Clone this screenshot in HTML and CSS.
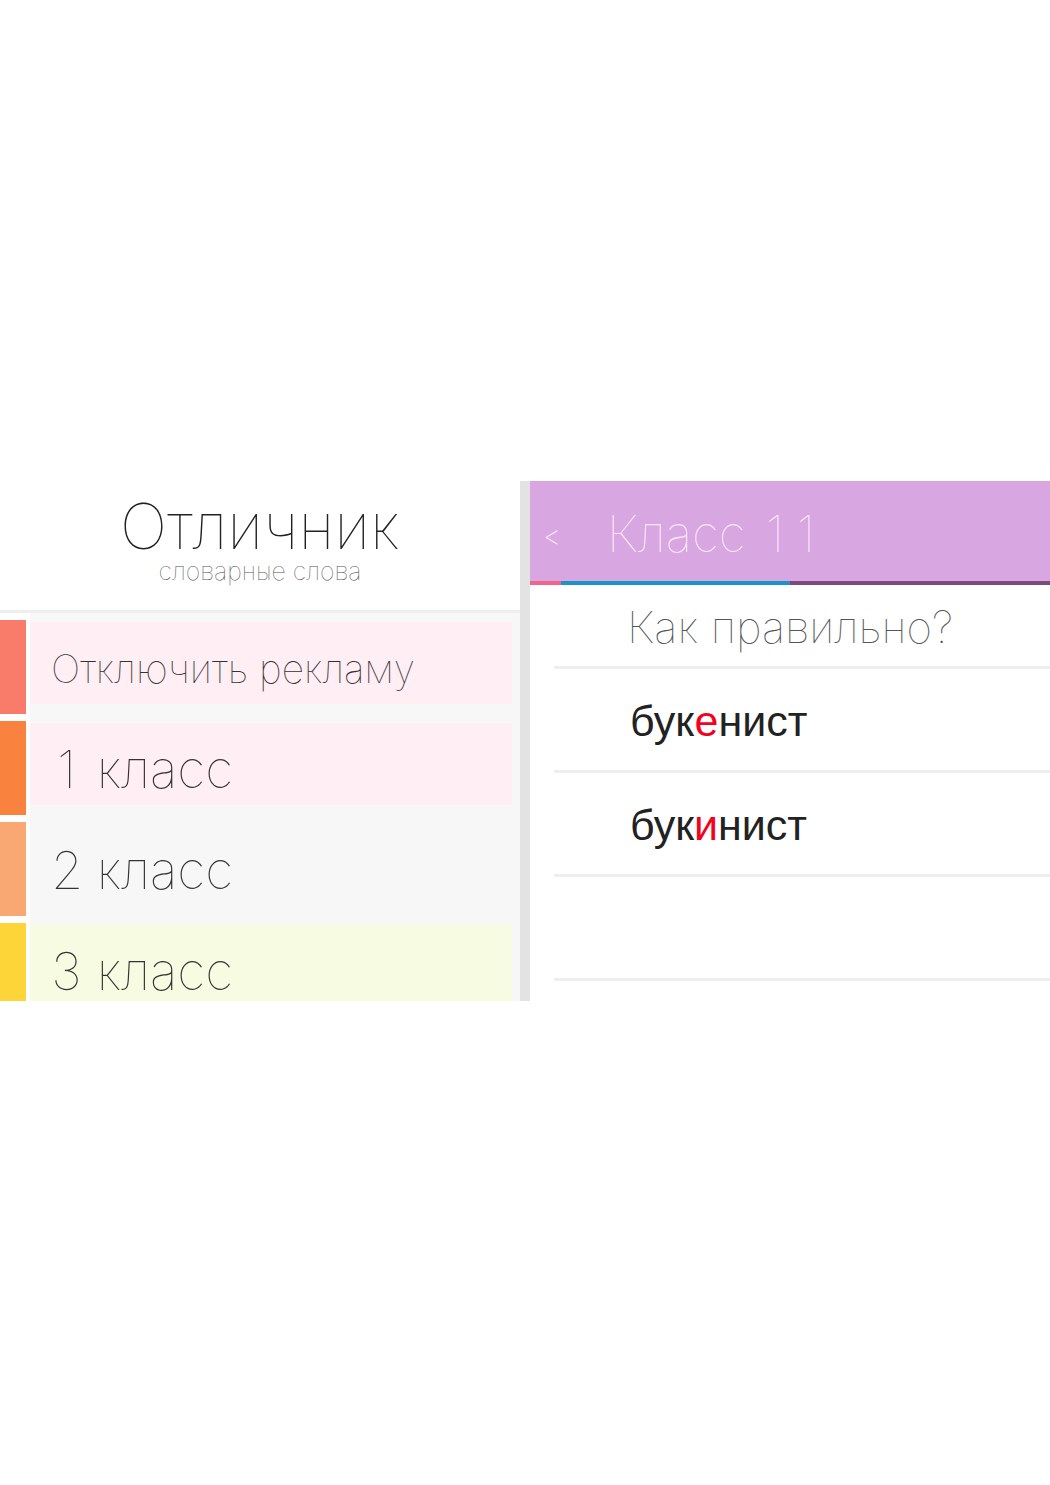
FILE: index.html
```html
<!DOCTYPE html>
<html lang="ru">
<head>
    <meta charset="UTF-8">
    <title>Отличник - словарные слова</title>
    <link rel="stylesheet" href="styles.css">
</head>
<body>
    <div class="app">
        <nav class="menu">
            <div class="brand">
                <h1>Отличник</h1>
                <p>словарные слова</p>
            </div>
            <button class="item coral pink small">Отключить рекламу</button>
            <button class="item orange pink"><span class="number">1</span> класс</button>
            <button class="item peach"><span class="number">2</span> класс</button>
            <button class="item yellow green"><span class="number">3</span> класс</button>
        </nav>

        <main class="quiz">
            <header class="topbar">
                <button class="back" aria-label="Назад">&lt;</button>
                <h2>Класс <span class="number">1</span><span class="number">1</span></h2>
            </header>
            <div class="progress">
                <span class="wrong"></span>
                <span class="right"></span>
            </div>
            <p class="question">Как правильно?</p>
            <button class="answer">бук<em>е</em>нист</button>
            <button class="answer">бук<em>и</em>нист</button>
            <div class="answer"></div>
        </main>
    </div>
</body>
</html>
```

FILE: styles.css
```css
* {
    box-sizing: border-box;
}
body {
    margin: 0;
    min-height: 100vh;
    padding-bottom: 4px;
    display: flex;
    align-items: center;
    background-color: #fff;
    font-family: Inter, "Liberation Sans", sans-serif;
    font-weight: 100;
    color: #222;
}
h1, h2, p {
    margin: 0;
    font-weight: 100;
}
button {
    border: none;
    background: none;
    font-family: inherit;
    font-weight: inherit;
    color: inherit;
    text-align: left;
    cursor: pointer;
}
.app {
    width: 100%;
    aspect-ratio: 105 / 52;
    display: grid;
    grid-template-columns: 1fr 1fr;
    overflow: hidden;
}

/* left menu */
.menu {
    min-height: 0;
    display: flex;
    flex-direction: column;
    gap: 7px;
    border-right: 5px solid #e3e3e3;
    background: linear-gradient(to right, #fff 30px, #f7f7f7 30px);
    overflow: hidden;
}
.brand {
    flex: none;
    height: 132px;
    padding-top: 10px;
    border-bottom: 3px solid #eee;
    background-color: #fff;
    text-align: center;
}
.brand h1 {
    font-size: 63px;
    line-height: 70px;
}
.brand p {
    font-size: 25px;
    line-height: 20px;
    color: #555;
}
.item {
    flex: none;
    height: 94px;
    padding: 4px 0 0 25px;
    border-left: 26px solid;
    font-size: 52px;
    color: #333;
    background-repeat: no-repeat;
    background-position: 4px 2px;
    background-size: calc(100% - 12px) 82px;
}
.small {
    font-size: 39px;
}
.number {
    display: inline-block;
    width: 31px;
    text-align: center;
}
.coral { border-color: #f97b69; }
.orange { border-color: #f9823e; }
.peach { border-color: #f9a873; }
.yellow { border-color: #fdd538; }
.pink { background-image: linear-gradient(#ffeff5, #ffeff5); }
.green { background-image: linear-gradient(#f7fbe2, #f7fbe2); }

/* quiz screen */
.quiz {
    min-height: 0;
    border-left: 5px solid #e3e3e3;
}
.topbar {
    height: 100px;
    padding-top: 6px;
    display: flex;
    align-items: center;
    background-color: #d8a6e0;
    color: #ffe4ff;
}
.topbar h2 {
    font-size: 50px;
}
.back {
    width: 77px;
    padding: 4px 0 0 13px;
    font-size: 28px;
    font-weight: 200;
}
.progress {
    height: 4px;
    display: flex;
    background-color: #7c4b7c;
}
.wrong {
    width: 6%;
    background-color: #f2668c;
}
.right {
    width: 44%;
    background-color: #1c94cb;
}
.question, .answer {
    display: block;
    margin-left: 24px;
    padding: 0 0 0 76px;
    border-bottom: 3px solid #eee;
}
.question {
    height: 84px;
    padding-left: 73px;
    font-size: 44px;
    line-height: 84px;
    color: #555;
}
.answer {
    width: calc(100% - 24px);
    height: 104px;
    padding-top: 4px;
    font-family: "Liberation Sans", Arial, sans-serif;
    font-size: 43px;
    font-weight: 400;
    color: #222;
}
.answer em {
    font-style: normal;
    color: #f5001d;
}
```
